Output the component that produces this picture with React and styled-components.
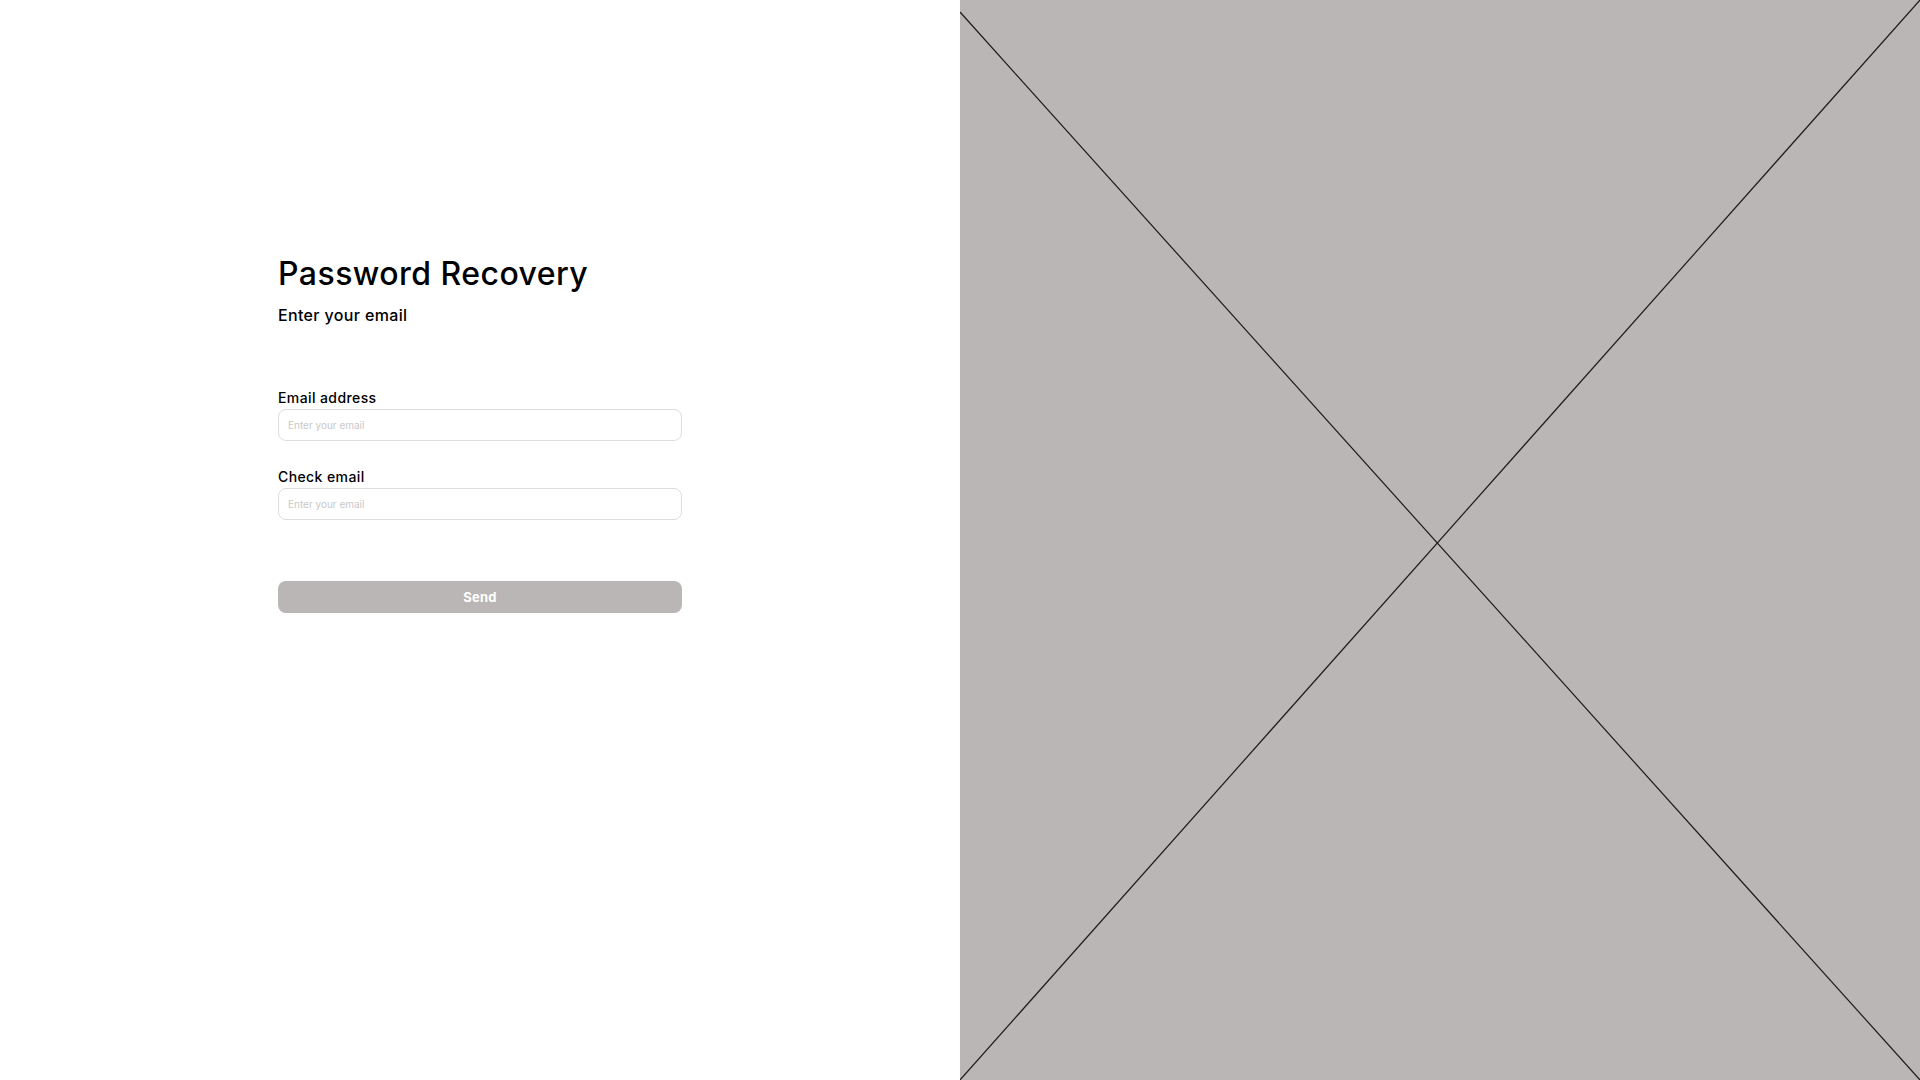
import styled, {createGlobalStyle} from 'styled-components'

const GlobalStyle = createGlobalStyle`
  html, body {
    margin: 0;
    padding: 0;
    background: #ffffff;
  }
  body {
    font-family: Inter, "Open Sans", sans-serif;
    color: #000000;
  }
`

const Page = styled.div`
  display: grid;
  grid-template-columns: 960px 960px;
  width: 1920px;
  height: 1080px;
  overflow: hidden;
`

const FormSide = styled.section`
  background: #ffffff;
  padding: 258px 0 0 278px;
  box-sizing: border-box;
`

const Form = styled.form`
  display: flex;
  flex-direction: column;
  width: 404px;
`

const Title = styled.h1`
  margin: 0;
  font-size: 32px;
  line-height: 32px;
  font-weight: 500;
  letter-spacing: 0.45px;
`

const Subtitle = styled.p`
  margin: 17px 0 68px;
  font-size: 16px;
  line-height: 16px;
  font-weight: 500;
  letter-spacing: 0.35px;
`

const Field = styled.label`
  display: flex;
  flex-direction: column;
  gap: 4px;
  margin-bottom: ${props => props.$spacing || 0}px;
`

const LabelText = styled.span`
  font-size: 14px;
  line-height: 14px;
  font-weight: 500;
  letter-spacing: 0.4px;
`

const Input = styled.input`
  box-sizing: border-box;
  height: 32px;
  width: 100%;
  padding: 0 9px;
  border: 1px solid #dedede;
  border-radius: 8px;
  font-family: inherit;
  font-size: 10px;
  color: #333333;
  outline: none;

  &::placeholder {
    color: #c9c9c9;
  }
`

const SendButton = styled.button`
  height: 32px;
  width: 100%;
  border: none;
  border-radius: 8px;
  background: #bab6b5;
  color: #ffffff;
  font-family: inherit;
  font-size: 13px;
  font-weight: 700;
  letter-spacing: 0.3px;
  cursor: pointer;
`

const ImageSide = styled.div`
  background: #bab6b5;
`

const Placeholder = styled.svg`
  display: block;
  width: 960px;
  height: 1080px;
`

const App = () => (
  <>
    <GlobalStyle />
    <Page>
      <FormSide>
        <Form onSubmit={e => e.preventDefault()}>
          <Title>Password Recovery</Title>
          <Subtitle>Enter your email</Subtitle>
          <Field $spacing={29}>
            <LabelText>Email address</LabelText>
            <Input type="email" placeholder="Enter your email" />
          </Field>
          <Field $spacing={61}>
            <LabelText>Check email</LabelText>
            <Input type="email" placeholder="Enter your email" />
          </Field>
          <SendButton type="submit">Send</SendButton>
        </Form>
      </FormSide>
      <ImageSide>
        <Placeholder viewBox="0 0 960 1080">
          <line x1="0" y1="12" x2="960" y2="1080" stroke="#1a1a1a" strokeWidth="1.2" />
          <line x1="960" y1="0" x2="0" y2="1080" stroke="#1a1a1a" strokeWidth="1.2" />
        </Placeholder>
      </ImageSide>
    </Page>
  </>
)

export default App
